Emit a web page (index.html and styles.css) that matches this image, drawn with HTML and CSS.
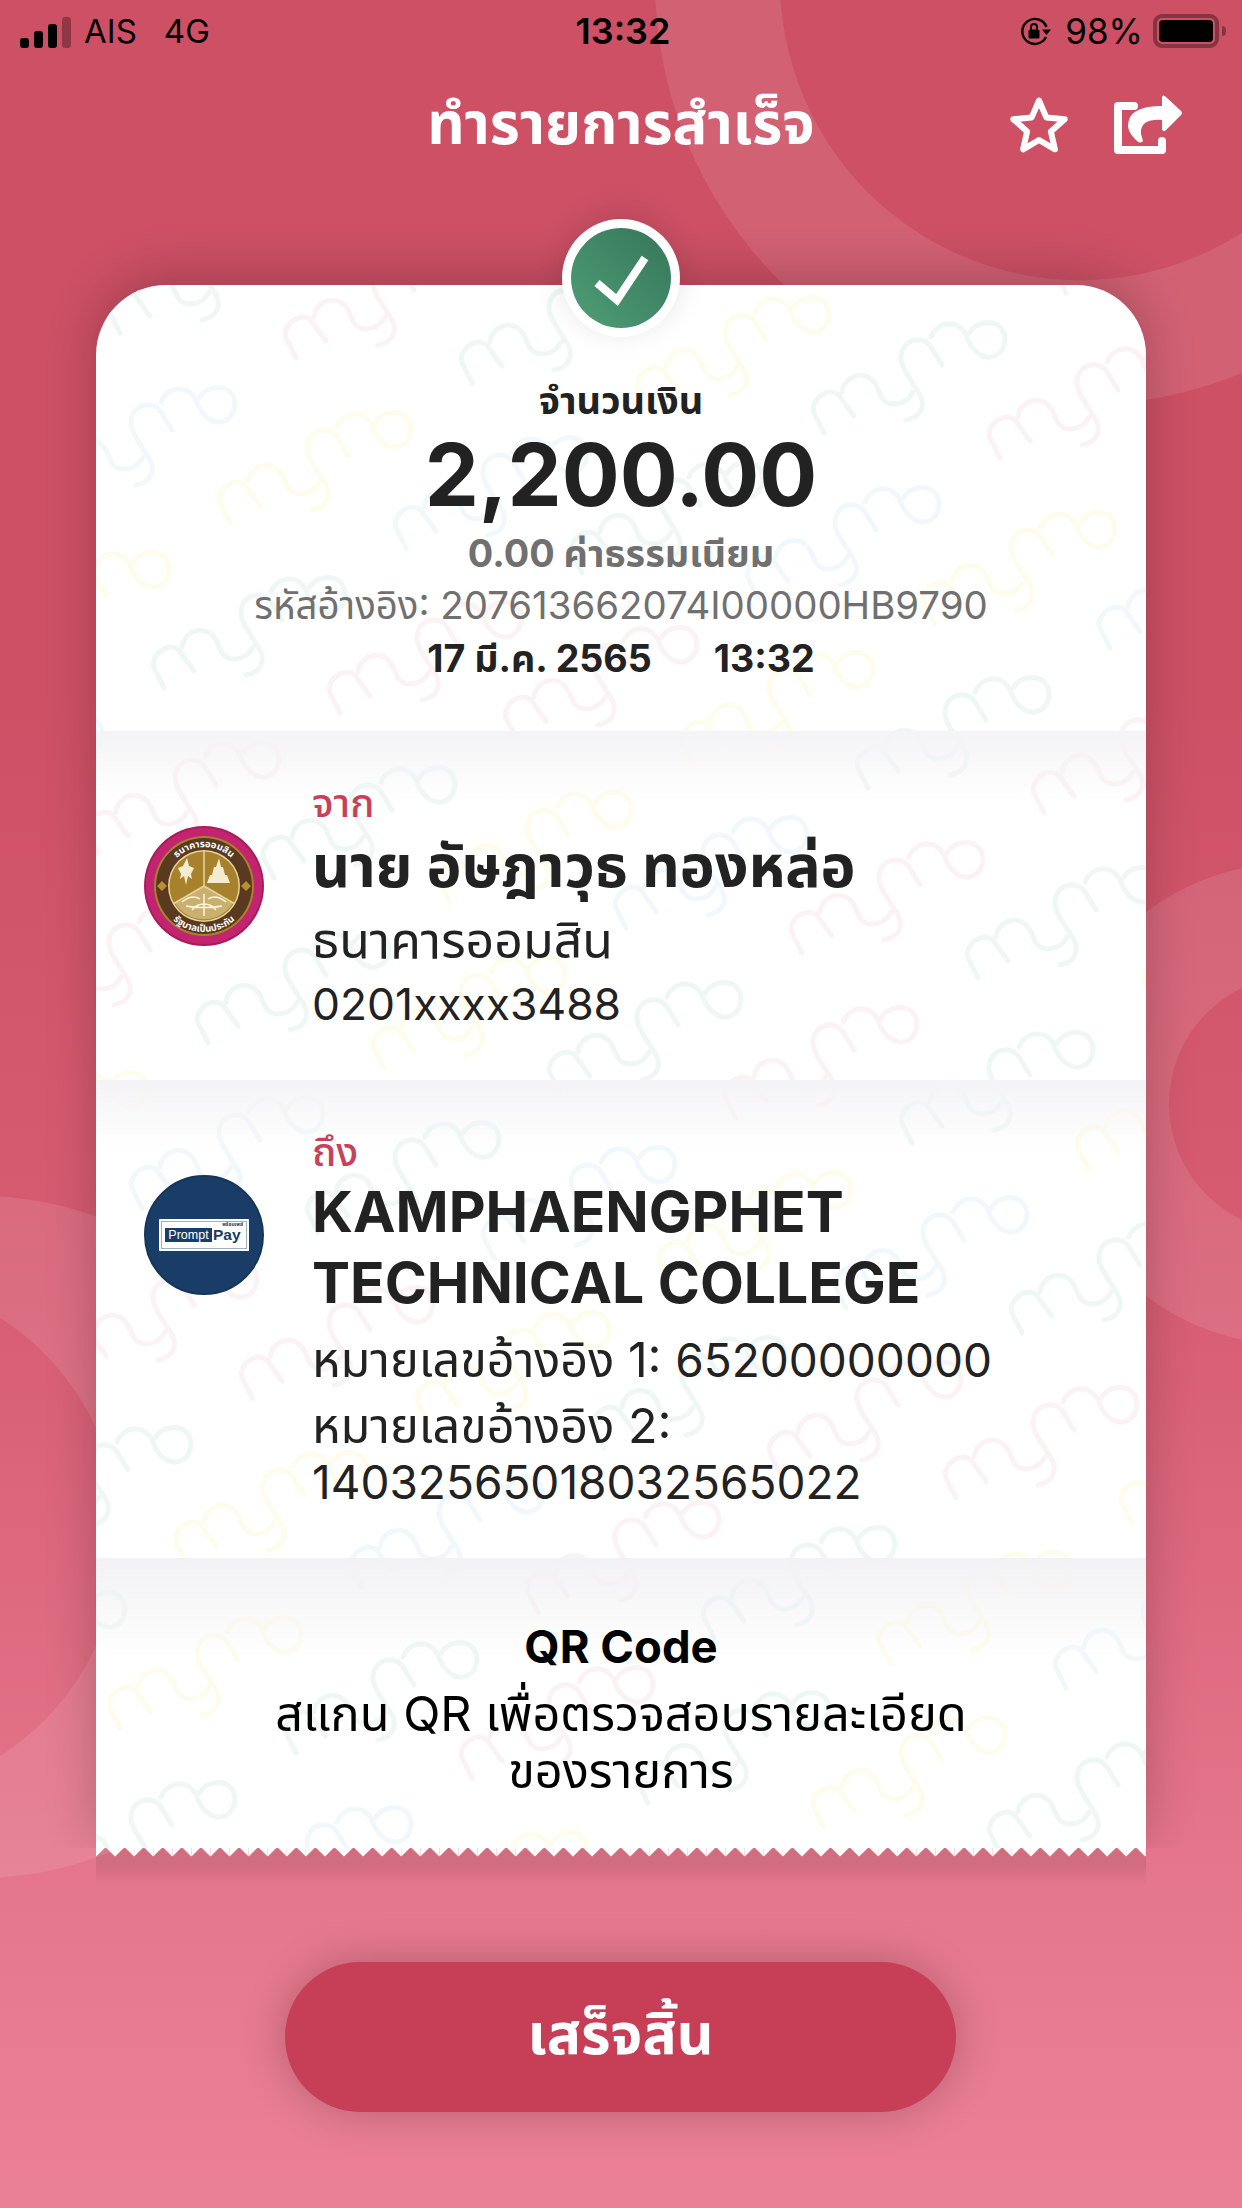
FILE: index.html
```html
<!DOCTYPE html>
<html lang="th">

<head>
    <meta charset="UTF-8">
    <meta name="viewport" content="width=device-width, initial-scale=1.0">
    <title>ทำรายการสำเร็จ</title>
    <link rel="stylesheet" href="styles.css">
</head>

<body>
    <!-- background rings -->
    <svg class="bg-rings" width="1242" height="2208" viewBox="0 0 1242 2208">
        <path fill-rule="evenodd" d="M655 -20a425 425 0 1 0 850 0a425 425 0 1 0 -850 0z M780 -20a300 300 0 1 0 600 0a300 300 0 1 0 -600 0z" />
        <path fill-rule="evenodd" d="M1051 1104a241 241 0 1 0 482 0a241 241 0 1 0 -482 0z M1169 1104a128.500 128.500 0 1 0 257 0a128.500 128.500 0 1 0 -257 0z" />
        <path fill-rule="evenodd" d="M-361 1537a341 341 0 1 0 682 0a341 341 0 1 0 -682 0z M-400 1537a260 260 0 1 0 520 0a260 260 0 1 0 -520 0z" />
    </svg>

    <div class="page">
        <div class="status-bar">
            <div class="status-left">
                <div class="signal">
                    <span class="bar bar-1"></span>
                    <span class="bar bar-2"></span>
                    <span class="bar bar-3"></span>
                    <span class="bar bar-4"></span>
                </div>
                <span class="carrier">AIS</span>
                <span class="network">4G</span>
            </div>
            <div class="status-time">13:32</div>
            <div class="status-right">
                <svg class="lock-icon" width="32" height="32" viewBox="0 0 32 32">
                    <path d="M27.5 12A12.5 12.5 0 1 0 27 22" fill="none" stroke="#000" stroke-width="2.4" />
                    <path d="M23 14.5h9l-4.5 5.5z" fill="#000" />
                    <rect x="9.5" y="14.5" width="11" height="9" rx="1.5" fill="#000" />
                    <path d="M12 15v-3a3 3 0 0 1 6 0v3" fill="none" stroke="#000" stroke-width="2" />
                </svg>
                <span class="battery-text">98%</span>
                <div class="battery">
                    <div class="battery-body"><div class="battery-fill"></div></div>
                    <div class="battery-nub"></div>
                </div>
            </div>
        </div>

        <div class="title-bar">
            <h1>ทำรายการสำเร็จ</h1>
            <svg class="star-icon" width="60" height="60" viewBox="0 0 60 60">
                <path d="M30 6.500L37.300 23.400L55.700 25.200L41.900 37.400L45.900 55.300L30 46L14.100 55.300L18.100 37.400L4.300 25.200L22.700 23.400Z" fill="none" stroke="#fff" stroke-width="6" stroke-linejoin="round" />
            </svg>
            <svg class="share-icon" width="76" height="66" viewBox="0 0 76 66">
                <path d="M24 14H8V58H52V49" fill="none" stroke="#fff" stroke-width="8" stroke-linejoin="round" stroke-linecap="round" />
                <path d="M52 5Q53 2 56 5L71 19Q73 21 71 23L56 38Q53 41 52 37V28C40 27 30 30 31 42L33 49Q30 52 27 49C20 42 16 36 19 28C22 18 35 14 52 14Z" fill="#fff" />
            </svg>
        </div>

        <div class="receipt-wrap">
            <div class="check-badge">
                <svg width="100" height="100" viewBox="0 0 100 100">
                    <polyline points="26,55 46,72 74,30" fill="none" stroke="#fff" stroke-width="8" />
                </svg>
            </div>

            <div class="receipt">
                <!-- mymo watermark, the pattern is sheared so the group undoes the shear -->
                <svg class="watermark" width="1050" height="1563">
                    <defs>
                        <g id="wm-logo" transform="matrix(.94623 -.13441 .37849 .94623 0 0)">
                            <path d="M13 113L3 93C-2 80 20 63 30 78L43 96M31 72C33 55 55 48 65 65L71 78C78 88 96 85 102 72M131 45L120 27C113 15 90 18 90 38C90 47 98 57 108 73C115 85 111 97 95 100M120 17C126 2 146 -2 155 15C160 30 170 38 180 37C193 35 198 18 190 8C183 0 166 0 158 13" />
                        </g>
                        <g id="wm-set">
                            <use href="#wm-logo" class="wm-y" x="0" y="0" />
                            <use href="#wm-logo" class="wm-b" x="176" y="0" />
                            <use href="#wm-logo" class="wm-g" x="352" y="0" />
                            <use href="#wm-logo" class="wm-b" x="528" y="0" />
                            <use href="#wm-logo" class="wm-g" x="0" y="165" />
                            <use href="#wm-logo" class="wm-p" x="176" y="165" />
                            <use href="#wm-logo" class="wm-p" x="352" y="165" />
                            <use href="#wm-logo" class="wm-y" x="528" y="165" />
                            <use href="#wm-logo" class="wm-p" x="0" y="330" />
                            <use href="#wm-logo" class="wm-g" x="176" y="330" />
                            <use href="#wm-logo" class="wm-y" x="352" y="330" />
                            <use href="#wm-logo" class="wm-b" x="528" y="330" />
                            <use href="#wm-logo" class="wm-p" x="0" y="495" />
                            <use href="#wm-logo" class="wm-g" x="176" y="495" />
                            <use href="#wm-logo" class="wm-y" x="352" y="495" />
                            <use href="#wm-logo" class="wm-g" x="528" y="495" />
                        </g>
                        <pattern id="wm-pattern" patternUnits="userSpaceOnUse" width="704" height="660" patternTransform="matrix(1 .14205 -.4 1 121 125)">
                            <use href="#wm-set" />
                            <use href="#wm-set" x="-704" />
                            <use href="#wm-set" y="660" />
                            <use href="#wm-set" x="-704" y="660" />
                        </pattern>
                    </defs>
                    <rect width="1050" height="1563" fill="url(#wm-pattern)" />
                </svg>

                <section class="summary">
                    <div class="amount-label">จำนวนเงิน</div>
                    <div class="amount">2,200.00</div>
                    <div class="fee">0.00 ค่าธรรมเนียม</div>
                    <div class="ref">รหัสอ้างอิง: 207613662074I00000HB9790</div>
                    <div class="date"><span>17 มี.ค. 2565</span><span>13:32</span></div>
                </section>

                <section class="party party-from">
                    <svg class="party-logo" width="120" height="120" viewBox="-60 -60 120 120">
                        <circle r="60" fill="#a81c5c" />
                        <circle r="58" fill="#c2246f" />
                        <circle r="50" fill="#a8812c" />
                        <circle r="48" fill="#59391f" />
                        <path id="seal-top" d="M-39 0A39 39 0 0 1 39 0" fill="none" />
                        <path id="seal-bottom" d="M-46 0A46 46 0 0 0 46 0" fill="none" />
                        <text class="seal-text"><textPath href="#seal-top" startOffset="50%" text-anchor="middle">ธนาคารออมสิน</textPath></text>
                        <text class="seal-text"><textPath href="#seal-bottom" startOffset="50%" text-anchor="middle">รัฐบาลเป็นประกัน</textPath></text>
                        <path d="M-42 -5l5 5l-5 5l-5 -5zM42 -5l5 5l-5 5l-5 -5z" fill="#b88f35" />
                        <circle r="36" fill="#e6d49a" />
                        <circle r="34.500" fill="#a8812c" />
                        <path d="M0 0L-29 17A34 34 0 0 0 29 17Z" fill="#c9b070" />
                        <path d="M0 -35V0M0 0L-31 18M0 0L31 18" stroke="#e6d49a" stroke-width="1.500" fill="none" />
                        <path d="M-22 16c6 -5 12 -7 18 -3M22 16c-6 -5 -12 -7 -18 -3M-12 24c6 -8 18 -8 24 0M0 8V30M-18 20c10 2 26 2 36 0" stroke="#fff6d8" stroke-width="1.500" fill="none" />
                        <path d="M-17 -28l-4 8l-5 2l3 6l-1 5l4 -3l2 9l2 -9l4 3l-1 -5l3 -6l-5 -2z" fill="#f4ecd0" />
                        <path d="M15 -28l2 9h2l2 8h2l3 8h-23l3 -8h2l2 -8h2z" fill="#f4ecd0" />
                    </svg>
                    <div class="party-info">
                        <div class="party-label">จาก</div>
                        <div class="party-name">นาย อัษฎาวุธ ทองหล่อ</div>
                        <div class="party-bank">ธนาคารออมสิน</div>
                        <div class="party-acct">0201xxxx3488</div>
                    </div>
                </section>

                <section class="party party-to">
                    <div class="pp-logo">
                        <div class="pp-box">
                            <div class="pp-th">พร้อมเพย์</div>
                            <div class="pp-row"><span class="pp-prompt">Prompt</span><span class="pp-pay">Pay</span></div>
                        </div>
                    </div>
                    <div class="party-info">
                        <div class="party-label">ถึง</div>
                        <div class="party-name party-name-en">KAMPHAENGPHET<br>TECHNICAL COLLEGE</div>
                        <div class="party-ref first">หมายเลขอ้างอิง 1: <span class="num">65200000000</span></div>
                        <div class="party-ref">หมายเลขอ้างอิง 2: <span class="num">14032565018032565022</span></div>
                    </div>
                </section>

                <section class="qr">
                    <div class="qr-title">QR Code</div>
                    <div class="qr-text">สแกน QR เพื่อตรวจสอบรายละเอียด<br>ของรายการ</div>
                </section>
            </div>
            <div class="receipt-edge"></div>
        </div>

        <button class="done-btn">เสร็จสิ้น</button>
    </div>
</body>

</html>
```

FILE: styles.css
```css
* {
    box-sizing: border-box;
}

html,
body {
    margin: 0;
    padding: 0;
}

body {
    position: relative;
    width: 1242px;
    height: 2208px;
    overflow: hidden;
    font-family: Inter, "Noto Sans Thai", "Noto Sans", sans-serif;
    color: #222;
    background: linear-gradient(to bottom, #cd5065 0, #cd5065 700px, #d75d73 1300px, #e5778c 1900px, #ea8096 2208px);
}

.bg-rings {
    position: absolute;
    left: 0;
    top: 0;
}

.bg-rings path {
    fill: rgba(255, 255, 255, 0.1);
}

.page {
    position: relative;
    display: flex;
    flex-direction: column;
}

/* status bar */
.status-bar {
    display: flex;
    align-items: center;
    justify-content: space-between;
    height: 62px;
    padding: 0 16px 0 20px;
    font-size: 33px;
    color: #000;
}

.status-left {
    display: flex;
    align-items: center;
    width: 420px;
}

.signal {
    display: flex;
    align-items: flex-end;
    gap: 5px;
    height: 32px;
    margin-top: 2px;
}

.bar {
    width: 9px;
    border-radius: 3px;
    background: #000;
}

.bar-1 {
    height: 10px;
}

.bar-2 {
    height: 17px;
}

.bar-3 {
    height: 24px;
}

.bar-4 {
    height: 31px;
    background: rgba(0, 0, 0, 0.3);
}

.carrier {
    margin-left: 13px;
}

.network {
    margin-left: 27px;
}

.status-time {
    font-size: 36px;
    font-weight: 600;
}

.status-right {
    display: flex;
    align-items: center;
    justify-content: flex-end;
    width: 420px;
    font-size: 35px;
}

.battery-text {
    margin-left: 14px;
}

.battery {
    display: flex;
    align-items: center;
    margin-left: 10px;
}

.battery-body {
    width: 66px;
    height: 34px;
    padding: 2px;
    border: 4px solid rgba(0, 0, 0, 0.35);
    border-radius: 9px;
}

.battery-fill {
    height: 100%;
    background: #000;
    border-radius: 4px;
}

.battery-nub {
    width: 4px;
    height: 10px;
    margin-left: 3px;
    border-radius: 0 4px 4px 0;
    background: rgba(0, 0, 0, 0.35);
}

/* title */
.title-bar {
    position: relative;
    height: 128px;
    display: flex;
    align-items: center;
    justify-content: center;
}

.title-bar h1 {
    margin: 0;
    font-size: 58px;
    font-weight: 700;
    color: #fff;
}

.star-icon {
    position: absolute;
    left: 1009px;
    top: 32px;
}

.share-icon {
    position: absolute;
    left: 1110px;
    top: 30px;
}

/* receipt card */
.receipt-wrap {
    position: relative;
    width: 1050px;
    margin: 95px 0 0 96px;
}

.check-badge {
    position: absolute;
    left: 466px;
    top: -66px;
    z-index: 3;
    width: 118px;
    height: 118px;
    padding: 9px;
    border-radius: 50%;
    background: #fff;
    box-shadow: 0 -6px 30px rgba(0, 0, 0, 0.12);
}

.check-badge svg {
    display: block;
    border-radius: 50%;
    background: linear-gradient(45deg, #4f9f77, #35755a);
}

.receipt {
    position: relative;
    height: 1563px;
    border-radius: 70px 70px 0 0;
    background: #fff;
    box-shadow: 0 -8px 50px rgba(0, 0, 0, 0.22);
    clip-path: inset(-90px -90px 0 -90px);
}

.watermark {
    position: absolute;
    left: 0;
    top: 0;
    border-radius: 70px 70px 0 0;
}

.watermark path {
    fill: none;
    stroke: currentColor;
    stroke-width: 5;
    stroke-linecap: round;
    stroke-linejoin: round;
}

.wm-y {
    color: #fffcec;
}

.wm-b {
    color: #f1f8fc;
}

.wm-g {
    color: #eef7f4;
}

.wm-p {
    color: #fbf2f3;
}

.receipt-edge {
    position: relative;
    height: 9px;
    background-image:
        linear-gradient(135deg, #fff 50%, transparent 50%),
        linear-gradient(225deg, #fff 50%, transparent 50%);
    background-size: 19.09px 19.09px;
    background-position: 0 -10px;
    background-repeat: repeat-x;
}

.receipt-edge::before {
    content: "";
    position: absolute;
    left: 0;
    right: 0;
    top: 0;
    height: 38px;
    z-index: -1;
    background: linear-gradient(to bottom, rgba(0, 0, 0, 0.08) 45%, rgba(0, 0, 0, 0));
}

section {
    position: relative;
}

.summary {
    height: 446px;
    padding-top: 90px;
    text-align: center;
}

.amount-label {
    font-size: 38px;
    font-weight: 700;
    line-height: 50px;
}

.amount {
    font-size: 86px;
    font-weight: 700;
    line-height: 100px;
}

.fee {
    font-size: 37.800px;
    font-weight: 700;
    line-height: 56px;
    color: #707070;
}

.ref {
    font-size: 38.400px;
    line-height: 48px;
    color: #707070;
}

.date {
    display: flex;
    justify-content: center;
    gap: 62px;
    font-size: 37.600px;
    font-weight: 700;
    line-height: 60px;
}

.party {
    display: flex;
    align-items: flex-start;
    padding: 48px 40px 0 48px;
    background: linear-gradient(to bottom, #f4f4f6, rgba(244, 244, 246, 0) 70px);
}

.party-from {
    height: 349px;
}

.party-to {
    height: 478px;
}

.party-logo {
    flex: none;
    display: block;
    margin-top: 47px;
}

.seal-text {
    font-size: 9.500px;
    font-weight: 700;
    fill: #fff;
}

.party-info {
    margin-left: 48px;
}

.party-label {
    font-size: 40px;
    font-weight: 500;
    line-height: 48px;
    color: #c8415a;
}

.party-name {
    font-size: 59px;
    font-weight: 700;
    line-height: 78px;
}

.party-name-en {
    font-size: 57px;
    line-height: 71px;
}

.party-bank {
    font-size: 50px;
    line-height: 70px;
}

.party-acct {
    font-size: 44.400px;
    line-height: 58px;
}

.party-ref {
    font-size: 48.500px;
    line-height: 56px;
    margin-top: 10px;
}

.party-ref.first {
    margin-top: 14px;
}

.num {
    font-size: 46px;
}

/* promptpay logo */
.pp-logo {
    flex: none;
    display: flex;
    align-items: center;
    justify-content: center;
    width: 120px;
    height: 120px;
    margin-top: 47px;
    border-radius: 50%;
    background: #1a3d67;
    border: 2px solid #16355a;
}

.pp-box {
    position: relative;
    width: 90px;
    height: 32px;
    padding: 2px 6px 0;
    background: #fff;
    box-shadow: inset 0 0 0 2px #fff, inset 0 0 0 3px #9db0c6;
}

.pp-th {
    font-size: 5px;
    font-weight: 700;
    line-height: 6px;
    text-align: right;
    color: #1a3d67;
}

.pp-row {
    display: flex;
    align-items: center;
    height: 15px;
}

.pp-prompt {
    width: 47px;
    height: 14px;
    font-family: "Liberation Sans", sans-serif;
    font-size: 12.500px;
    line-height: 14px;
    text-align: center;
    color: #fff;
    background: #1a3d67;
}

.pp-pay {
    margin-left: 1px;
    font-family: "Liberation Sans", sans-serif;
    font-size: 15.500px;
    font-weight: 700;
    line-height: 14px;
    color: #1a3d67;
}

.qr {
    height: 290px;
    padding-top: 61px;
    text-align: center;
    color: #000;
    background: linear-gradient(to bottom, #f2f2f4, rgba(242, 242, 244, 0) 100px);
}

.qr-title {
    font-size: 45.500px;
    font-weight: 700;
    line-height: 56px;
    margin-bottom: 10px;
}

.qr-text {
    font-size: 48.600px;
    line-height: 57px;
}

/* button */
.done-btn {
    display: block;
    width: 671px;
    height: 150px;
    margin: 105px 0 0 285px;
    border: none;
    border-radius: 75px;
    font-family: inherit;
    font-size: 57px;
    font-weight: 700;
    color: #fff;
    background: #c63f56;
    box-shadow: 0 0 44px rgba(0, 0, 0, 0.22);
}
```
